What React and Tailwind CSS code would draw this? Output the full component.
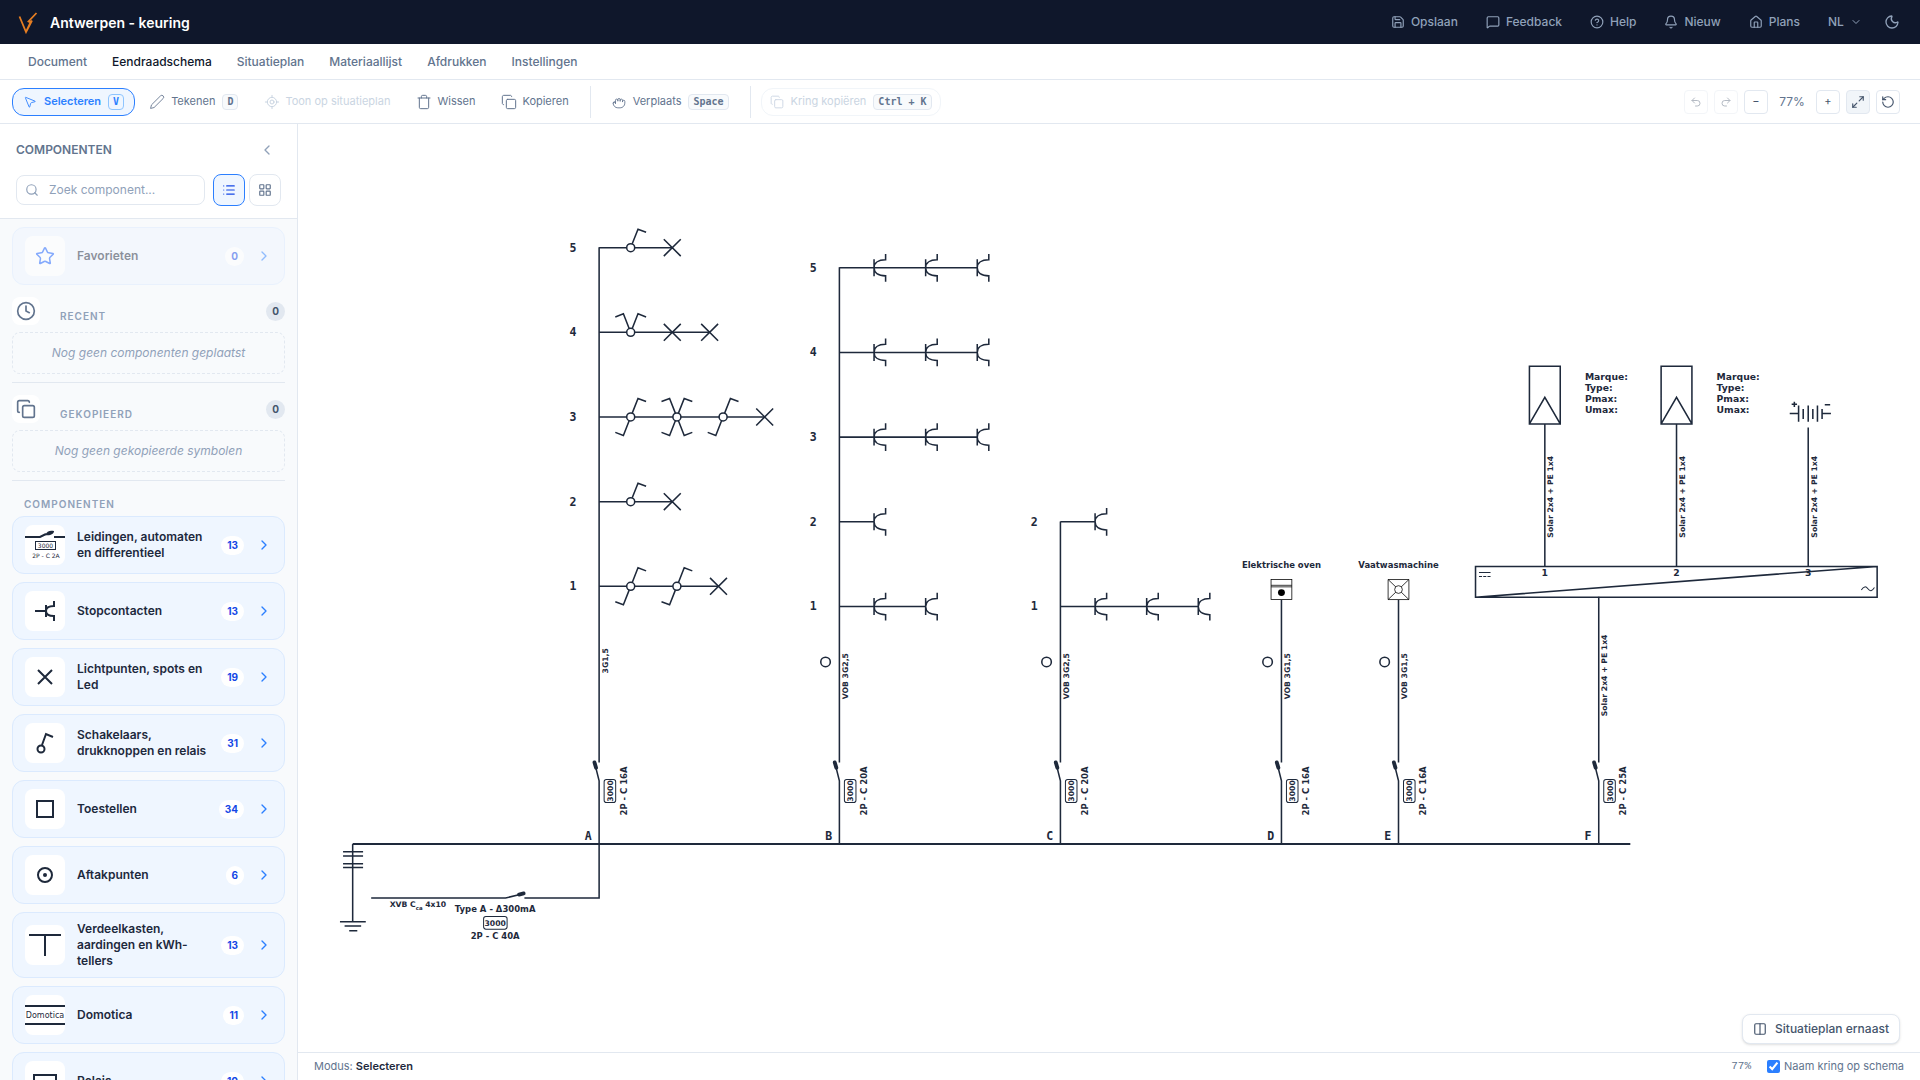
import React from 'react'
import {
  Bell,
  ChevronDown,
  ChevronLeft,
  ChevronRight,
  CircleHelp,
  Clock,
  Columns2,
  Copy,
  HandGrab,
  House,
  LayoutGrid,
  List,
  LocateFixed,
  Maximize2,
  MessageSquare,
  Moon,
  MousePointer2,
  Redo2,
  RotateCcw,
  Save,
  Search,
  Star,
  Trash,
  Undo2,
} from 'lucide-react'

const headerLinks = [
  { label: 'Opslaan', icon: Save },
  { label: 'Feedback', icon: MessageSquare },
  { label: 'Help', icon: CircleHelp },
  { label: 'Nieuw', icon: Bell },
  { label: 'Plans', icon: House },
]

const tabs = ['Document', 'Eendraadschema', 'Situatieplan', 'Materiaallijst', 'Afdrukken', 'Instellingen']

const categories = [
  { name: 'Leidingen, automaten en differentieel', count: 13, symbol: BreakerSymbol },
  { name: 'Stopcontacten', count: 13, symbol: SocketSymbol },
  { name: 'Lichtpunten, spots en Led', count: 19, symbol: LampSymbol },
  { name: 'Schakelaars, drukknoppen en relais', count: 31, symbol: SwitchSymbol },
  { name: 'Toestellen', count: 34, symbol: DeviceSymbol },
  { name: 'Aftakpunten', count: 6, symbol: JunctionSymbol },
  { name: 'Verdeelkasten, aardingen en kWh-tellers', count: 13, symbol: BoardSymbol },
  { name: 'Domotica', count: 11, symbol: DomoticaSymbol },
  { name: 'Relais', count: 10, symbol: RelaySymbol },
]

/* ---------- Sidebar symbols ---------- */

function Symbol({ children }) {
  return (
    <svg viewBox="0 0 40 40" className="size-10" fill="none" stroke="#1e293b" strokeWidth="2" aria-hidden="true">
      {children}
    </svg>
  )
}

function BreakerSymbol() {
  return (
    <Symbol>
      <path d="M0 12h15l6-3M29 12h11" />
      <path d="M20 10c2-4 5-5 9-4 0 3-4 5-9 4z" fill="#1e293b" stroke="none" />
      <rect x="10.5" y="16.5" width="20" height="8" strokeWidth="1" />
      <text x="20.5" y="23" fontSize="6" textAnchor="middle" fill="#1e293b" stroke="none" className="font-['DejaVu_Sans']">3000</text>
      <text x="21" y="33" fontSize="6" textAnchor="middle" fill="#1e293b" stroke="none" className="font-['DejaVu_Sans']">2P - C 2A</text>
    </Symbol>
  )
}

function SocketSymbol() {
  return (
    <Symbol>
      <path d="M10 20h11M21 14v12M29 10v5c-5 0-8 2-8 5s3 5 8 5v5" />
    </Symbol>
  )
}

function LampSymbol() {
  return (
    <Symbol>
      <path d="M13 13l14 14M27 13L13 27" />
    </Symbol>
  )
}

function SwitchSymbol() {
  return (
    <Symbol>
      <circle cx="16" cy="26" r="3.5" />
      <path d="M17 22l4-11 7 3" />
    </Symbol>
  )
}

function DeviceSymbol() {
  return (
    <Symbol>
      <rect x="12" y="12" width="16" height="16" />
    </Symbol>
  )
}

function JunctionSymbol() {
  return (
    <Symbol>
      <circle cx="20" cy="20" r="7" />
      <circle cx="20" cy="20" r="2" fill="#1e293b" stroke="none" />
    </Symbol>
  )
}

function BoardSymbol() {
  return (
    <Symbol>
      <path d="M4 10h32M20 10v21" />
    </Symbol>
  )
}

function DomoticaSymbol() {
  return (
    <Symbol>
      <path d="M0 11h40M0 29h40" />
      <text x="20" y="23" fontSize="8" textAnchor="middle" fill="#1e293b" stroke="none" className="font-['DejaVu_Sans']">Domotica</text>
    </Symbol>
  )
}

function RelaySymbol() {
  return (
    <Symbol>
      <rect x="9" y="14" width="22" height="12" />
    </Symbol>
  )
}

/* ---------- Schema ---------- */

const BUS_Y = 935

function Label({ x, y, size = 11, anchor = 'middle', vertical, children }) {
  return (
    <text
      x={x}
      y={y}
      fontSize={size}
      textAnchor={anchor}
      transform={vertical ? `rotate(-90 ${x} ${y})` : undefined}
      fill="#1e293b"
      stroke="none"
      className="font-['DejaVu_Sans',sans-serif] font-bold"
    >
      {children}
    </text>
  )
}

function Mark({ x, y, children }) {
  return (
    <text x={x} y={y} fontSize="15" textAnchor="middle" fill="#1e293b" stroke="none" className="font-['DejaVu_Sans_Mono',monospace] font-bold">
      {children}
    </text>
  )
}

function Lamp({ x, y }) {
  return <path d={`M${x - 11} ${y - 11}l22 22M${x + 11} ${y - 11}l-22 22`} />
}

const arms = {
  ur: 'M2 -5L9.5 -24L20 -20',
  ul: 'M-2 -5L-9.5 -24L-20 -20',
  dl: 'M-2 5L-9.5 24L-20 20',
  dr: 'M2 5L9.5 24L20 20',
}

function Switch({ x, y, dirs }) {
  return (
    <g transform={`translate(${x} ${y})`}>
      {dirs.map((dir) => (
        <path key={dir} d={arms[dir]} />
      ))}
      <circle r="5.2" fill="#fff" />
    </g>
  )
}

function Socket({ x, y }) {
  return (
    <g transform={`translate(${x} ${y})`}>
      <path d="M0 -11V11M15 -18V-10.5C5 -10.5 0 -6 0 0C0 6 5 10.5 15 10.5V18" />
    </g>
  )
}

// Vertical feeder between the bus and the first load of a circuit
function Feeder({ x, top, name, rating, cable, cableY = 717, conduit = true }) {
  return (
    <g>
      <path d={`M${x} ${top}V829M${x} ${BUS_Y}V853L${x - 6} 829`} />
      <path d={`M${x - 6} 829L${x - 4} 836`} strokeWidth="5" strokeLinecap="round" />
      <rect x={x + 6.5} y="851" width="15" height="30" rx="3" strokeWidth="1.3" />
      <Label x={x + 18} y={866} size={10} vertical>3000</Label>
      <Label x={x + 36} y={866} vertical>{rating}</Label>
      <Label x={x + 11} y={cableY} size={10} vertical>{cable}</Label>
      {conduit && <circle cx={x - 18} cy="698.5" r="6.2" />}
      <Mark x={x - 14} y={930}>{name}</Mark>
    </g>
  )
}

const lightRows = [
  { n: 5, y: 160.6, switches: [[432, ['ur']]], lamps: [486] },
  { n: 4, y: 270.5, switches: [[432, ['ul', 'ur']]], lamps: [486, 534.5] },
  { n: 3, y: 380.4, switches: [[432, ['ur', 'dl']], [492, ['ul', 'ur', 'dl', 'dr']], [552, ['ur', 'dl']]], lamps: [606] },
  { n: 2, y: 490.4, switches: [[432, ['ur']]], lamps: [486] },
  { n: 1, y: 600.3, switches: [[432, ['ur', 'dl']], [492, ['ur', 'dl']]], lamps: [546] },
]

const socketRows = [
  { x: 703, n: 5, y: 186.7, count: 3 },
  { x: 703, n: 4, y: 296.6, count: 3 },
  { x: 703, n: 3, y: 406.6, count: 3 },
  { x: 703, n: 2, y: 516.6, count: 1 },
  { x: 703, n: 1, y: 626.6, count: 2 },
  { x: 990, n: 2, y: 516.6, count: 1 },
  { x: 990, n: 1, y: 626.6, count: 3 },
]

function LightRow({ row }) {
  return (
    <g>
      <path d={`M391 ${row.y}H${row.lamps[row.lamps.length - 1]}`} />
      <Mark x={357} y={row.y + 5}>{row.n}</Mark>
      {row.switches.map(([x, dirs]) => (
        <Switch key={x} x={x} y={row.y} dirs={dirs} />
      ))}
      {row.lamps.map((x) => (
        <Lamp key={x} x={x} y={row.y} />
      ))}
    </g>
  )
}

function SocketRow({ row }) {
  const xs = Array.from({ length: row.count }, (_, i) => row.x + 45 + i * 67)
  return (
    <g>
      <path d={`M${row.x} ${row.y}H${xs[xs.length - 1]}`} />
      <Mark x={row.x - 34} y={row.y + 5}>{row.n}</Mark>
      {xs.map((x) => (
        <Socket key={x} x={x} y={row.y} />
      ))}
    </g>
  )
}

function Panel({ x }) {
  return (
    <g>
      <path d={`M${x - 20} 314.5h40v75h-40zM${x - 20} 389.5L${x} 355L${x + 20} 389.5`} />
      {['Marque:', 'Type:', 'Pmax:', 'Umax:'].map((line, i) => (
        <Label key={line} x={x + 52} y={333 + i * 14} size={12} anchor="start">{line}</Label>
      ))}
    </g>
  )
}

function Battery() {
  return (
    <g>
      <path d="M1937 376h11.5M1948.5 365.5v21M1954.5 370v13M1961 365.5v21M1967 370v13M1973 365.5v21M1979 370v13M1979 376h11.5" />
      <path d="M1939.5 364h7M1943 360.5v7M1982.5 364.5h7" />
    </g>
  )
}

function Inverter() {
  return (
    <g>
      <path d="M1529 574.5h521.5v40H1529zM1529 614.5L2050.5 574.5" />
      <path d="M1533.5 582.5h15M1533.5 587.5h4M1539 587.5h4M1544.5 587.5h4" strokeWidth="1.3" />
      <path d="M2030 605c3 -5 6 -5 8.5 -1.5s5.5 3.5 8.5 -1.5" strokeWidth="1.3" />
      {[1619, 1790, 1961].map((x, i) => (
        <g key={x}>
          <path d={`M${x} 574.5V${i === 2 ? 394 : 389.5}`} />
          <Label x={x + 11} y={484} size={10} vertical>Solar 2x4 + PE 1x4</Label>
          <Label x={x} y={587} size={12}>{i + 1}</Label>
        </g>
      ))}
    </g>
  )
}

function Schema() {
  return (
    <svg
      viewBox="0 0 2106 1205"
      preserveAspectRatio="xMinYMin meet"
      className="block h-full w-full"
      fill="none"
      stroke="#1e293b"
      strokeWidth="2"
      role="img"
      aria-label="Eendraadschema"
    >
      {/* Bus bar and earthing */}
      <path d={`M71 ${BUS_Y}H1730`} strokeWidth="2.5" />
      <path d={`M71 1036V${BUS_Y}`} />
      <path d="M58.5 945h26M58.5 950.5h26M58.5 960.5h26M58.5 965.5h26" />
      <path d="M54.5 1036H88M60.5 1041.5H82M66.5 1047.5H77" />

      {/* Main breaker */}
      <path d={`M391 ${BUS_Y}V1005H294M95 1005H269.5L291 1000`} />
      <path d="M287 1000.5L293 999" strokeWidth="5" strokeLinecap="round" />
      <Label x={119} y={1017} size={10} anchor="start">
        XVB C<tspan fontSize="7" dy="3">ca</tspan><tspan dy="-3"> 4x10</tspan>
      </Label>
      <Label x={256} y={1023}>Type A - Δ300mA</Label>
      <rect x="241" y="1029" width="30.5" height="16.5" rx="3" strokeWidth="1.3" />
      <Label x={256} y={1041} size={10}>3000</Label>
      <Label x={256} y={1058}>2P - C 40A</Label>

      {/* Circuits */}
      <Feeder x={391} top={160} name="A" rating="2P - C 16A" cable="3G1,5" cableY={697} conduit={false} />
      <Feeder x={703} top={186} name="B" rating="2P - C 20A" cable="VOB 3G2,5" />
      <Feeder x={990} top={516} name="C" rating="2P - C 20A" cable="VOB 3G2,5" />
      <Feeder x={1277} top={618} name="D" rating="2P - C 16A" cable="VOB 3G1,5" />
      <Feeder x={1429} top={618} name="E" rating="2P - C 16A" cable="VOB 3G1,5" />
      <Feeder x={1689} top={614} name="F" rating="2P - C 25A" cable="Solar 2x4 + PE 1x4" cableY={716} conduit={false} />

      {lightRows.map((row) => (
        <LightRow key={row.n} row={row} />
      ))}
      {socketRows.map((row) => (
        <SocketRow key={`${row.x}-${row.n}`} row={row} />
      ))}

      {/* Appliances */}
      <Label x={1277} y={576}>Elektrische oven</Label>
      <g stroke="#000" strokeWidth="1">
        <rect x="1263.5" y="591.5" width="27" height="26" />
        <path d="M1263.5 599h27M1263.5 601h27" />
        <circle cx="1277" cy="608.5" r="4.5" fill="#000" stroke="none" />
      </g>
      <Label x={1429} y={576}>Vaatwasmachine</Label>
      <g stroke="#000" strokeWidth="1">
        <path d="M1415.5 591.5h27v26h-27zl27 26M1442.5 591.5l-27 26" />
        <circle cx="1429" cy="604.5" r="5" fill="#fff" />
      </g>

      {/* Solar installation */}
      <Panel x={1619} />
      <Panel x={1790} />
      <Battery />
      <Inverter />
    </svg>
  )
}

/* ---------- Page chrome ---------- */

function Header() {
  return (
    <header className="flex h-11 shrink-0 items-center bg-slate-900 pl-4 pr-3">
      <svg viewBox="0 0 24 24" className="size-6" fill="none" stroke="#e67e22" strokeWidth="1.8" aria-hidden="true">
        <path d="M3.5 6.5L10 22L14.5 12.5L12.5 11.5L20.5 3M14.5 12.5L13 10M10 22L16 10.5" />
      </svg>
      <h1 className="ml-2.5 text-[14px] font-semibold text-white">Antwerpen - keuring</h1>
      <nav className="ml-auto flex items-center gap-1 text-[12px] font-medium text-slate-400">
        {headerLinks.map(({ label, icon: Icon }) => (
          <button key={label} type="button" className="flex items-center gap-1.5 px-3">
            <Icon className="size-3.5" />
            {label}
          </button>
        ))}
        <label className="relative flex items-center pl-3">
          <select aria-label="Taal" className="w-11 appearance-none bg-transparent">
            <option>NL</option>
          </select>
          <ChevronDown className="pointer-events-none absolute right-2.5 size-3" />
        </label>
        <button type="button" aria-label="Donkere modus" className="flex w-8 justify-center">
          <Moon className="size-4" />
        </button>
      </nav>
    </header>
  )
}

function Tabs() {
  return (
    <nav className="flex h-9 shrink-0 items-center gap-px border-b border-slate-200 bg-white px-4">
      {tabs.map((tab) => (
        <a key={tab} href="#" className={`px-3 text-[12px] font-medium ${tab === 'Eendraadschema' ? 'text-slate-900' : 'text-slate-500'}`}>
          {tab}
        </a>
      ))}
    </nav>
  )
}

function Kbd({ active, children }) {
  return (
    <kbd
      className={`flex h-4 items-center rounded-sm border px-1 font-['DejaVu_Sans_Mono',monospace] text-[10px] font-bold ${active ? 'border-blue-300 bg-blue-50 text-blue-500' : 'border-slate-200 bg-slate-50 text-slate-500'}`}
    >
      {children}
    </kbd>
  )
}

function PencilIcon() {
  return (
    <svg viewBox="0 0 24 24" className="size-3.5 overflow-visible" fill="none" stroke="currentColor" strokeWidth="1.5" strokeLinejoin="round" aria-hidden="true">
      <path d="M18 1.5a3 3 0 1 1 4.5 4.5L7 21.5 1 23l1.5-6z" />
    </svg>
  )
}

function Toolbar() {
  const tool = 'flex h-7 items-center gap-[7px] rounded-xl border border-transparent px-2.5'
  const wideTool = 'flex h-7 items-center gap-[5px] rounded-xl border border-transparent px-2.5'
  const square = 'flex size-6 items-center justify-center rounded border border-slate-200 text-slate-600'
  return (
    <div className="flex h-11 shrink-0 items-center border-b border-slate-200 bg-white pl-3 pr-5 text-[11px] text-slate-500">
      <div className="flex items-center gap-1">
        <button type="button" className="flex h-7 items-center gap-[7px] rounded-xl border border-blue-500 bg-blue-50 px-2.5 font-semibold text-blue-500">
          <MousePointer2 className="size-3.5" strokeWidth={1.5} />
          Selecteren
          <Kbd active>V</Kbd>
        </button>
        <button type="button" className={tool}>
          <PencilIcon />
          Tekenen
          <Kbd>D</Kbd>
        </button>
        <button type="button" disabled className={`${wideTool} text-slate-300`}>
          <LocateFixed className="size-4" strokeWidth={1.5} />
          Toon op situatieplan
        </button>
        <button type="button" className={wideTool}>
          <Trash className="size-4" strokeWidth={1.5} />
          Wissen
        </button>
        <button type="button" className={wideTool}>
          <Copy className="size-4" strokeWidth={1.5} />
          Kopieren
        </button>
      </div>
      <div className="mx-2.5 h-8 w-px bg-slate-200" />
      <button type="button" className={tool}>
        <HandGrab className="size-3.5" strokeWidth={1.5} />
        Verplaats
        <Kbd>Space</Kbd>
      </button>
      <div className="mx-2.5 h-8 w-px bg-slate-200" />
      <button type="button" disabled className="flex h-7 items-center gap-[7px] rounded-xl border border-slate-100 px-2 text-slate-300">
        <Copy className="size-3.5" strokeWidth={1.5} />
        Kring kopiëren
        <Kbd>Ctrl + K</Kbd>
      </button>

      <div className="ml-auto flex items-center gap-1.5">
        <button type="button" disabled aria-label="Ongedaan maken" className={`${square} opacity-40`}>
          <Undo2 className="size-3" />
        </button>
        <button type="button" disabled aria-label="Opnieuw" className={`${square} opacity-40`}>
          <Redo2 className="size-3" />
        </button>
        <button type="button" aria-label="Uitzoomen" className={square}>−</button>
        <span className="w-9 text-center text-[12px]">77%</span>
        <button type="button" aria-label="Inzoomen" className={square}>+</button>
        <button type="button" aria-label="Passend maken" className={`${square} bg-slate-100`}>
          <Maximize2 className="size-3.5" />
        </button>
        <button type="button" aria-label="Zoom herstellen" className={square}>
          <RotateCcw className="size-3.5" />
        </button>
      </div>
    </div>
  )
}

function CategoryCard({ name, count, faded, children }) {
  return (
    <button
      type="button"
      className={`flex min-h-[58px] w-full shrink-0 items-center rounded-xl border border-blue-100 bg-blue-50 px-3 py-2 text-left ${faded ? 'opacity-50' : ''}`}
    >
      <span className="flex size-10 shrink-0 items-center justify-center overflow-hidden rounded-lg bg-white">{children}</span>
      <span className="ml-3 w-[134px] text-[12px] leading-4 font-semibold text-slate-800">{name}</span>
      <span className="flex flex-1 justify-end">
        <span className="rounded-full bg-white px-1.5 text-[10px] leading-[19px] font-bold text-blue-700">{count}</span>
      </span>
      <ChevronRight className="ml-3 size-4 shrink-0 text-blue-500" />
    </button>
  )
}

function EmptyGroup({ title, text, icon: Icon }) {
  return (
    <section className="border-b border-slate-200 pt-3 pb-2">
      <div className="flex items-center">
        <span className="flex size-7 items-center justify-center rounded-lg bg-white text-slate-500">
          <Icon className="size-5" />
        </span>
        <h3 className="ml-5 pt-2.5 text-[10px] font-semibold tracking-widest text-slate-400">{title}</h3>
        <span className="ml-auto rounded-full bg-slate-200 px-1.5 text-[10px] leading-[19px] font-bold text-slate-600">0</span>
      </div>
      <p className="mt-[7px] flex h-[42px] items-center justify-center rounded-lg border border-dashed border-slate-200 text-[12px] text-slate-400 italic">
        {text}
      </p>
    </section>
  )
}

function Sidebar() {
  return (
    <aside className="flex w-[298px] shrink-0 flex-col border-r border-slate-200 bg-slate-50">
      <div className="border-b border-slate-200 bg-white px-4 pt-4 pb-3">
        <div className="flex h-5 items-center justify-between">
          <h2 className="text-[12px] font-semibold text-slate-500">COMPONENTEN</h2>
          <button type="button" aria-label="Paneel inklappen" className="mr-1.5 text-slate-400">
            <ChevronLeft className="size-4" />
          </button>
        </div>
        <div className="mt-3.5 flex items-center gap-1">
          <label className="mr-1 flex h-[30px] min-w-0 flex-1 items-center gap-2.5 rounded-lg border border-slate-200 px-2 text-slate-400">
            <Search className="size-3.5 shrink-0" />
            <input type="text" aria-label="Zoek component" placeholder="Zoek component..." className="min-w-0 flex-1 text-[12px] outline-none placeholder:text-slate-400" />
          </label>
          <button type="button" aria-label="Lijst" className="flex size-8 items-center justify-center rounded-lg border border-blue-500 bg-blue-50 text-blue-700">
            <List className="size-3.5" />
          </button>
          <button type="button" aria-label="Raster" className="flex size-8 items-center justify-center rounded-lg border border-slate-200 text-slate-500">
            <LayoutGrid className="size-3.5" />
          </button>
        </div>
      </div>

      <div className="flex min-h-0 flex-1 flex-col overflow-hidden px-3 pt-2">
        <CategoryCard name="Favorieten" count={0} faded>
          <Star className="size-5 text-blue-600" strokeWidth={1.8} />
        </CategoryCard>
        <EmptyGroup title="RECENT" text="Nog geen componenten geplaatst" icon={Clock} />
        <EmptyGroup title="GEKOPIEERD" text="Nog geen gekopieerde symbolen" icon={Copy} />

        <h3 className="mt-[15px] pl-3 text-[10px] leading-4 font-semibold tracking-widest text-slate-400">COMPONENTEN</h3>
        <div className="mt-1 flex flex-col gap-2">
          {categories.map(({ name, count, symbol: Picture }) => (
            <CategoryCard key={name} name={name} count={count}>
              <Picture />
            </CategoryCard>
          ))}
        </div>
      </div>
    </aside>
  )
}

export default function App() {
  return (
    <div className="flex h-screen flex-col overflow-hidden bg-white font-[Inter,sans-serif]">
      <Header />
      <Tabs />
      <Toolbar />
      <div className="flex min-h-0 flex-1">
        <Sidebar />
        <div className="flex min-w-0 flex-1 flex-col">
          <main className="relative min-h-0 flex-1">
            <Schema />
            <button
              type="button"
              className="absolute right-5 bottom-2 flex h-[30px] items-center gap-2 rounded-lg border border-slate-200 bg-white px-2.5 text-[12px] font-medium text-slate-600 shadow-sm"
            >
              <Columns2 className="size-3.5" />
              Situatieplan ernaast
            </button>
          </main>
          <footer className="flex h-7 shrink-0 items-center border-t border-slate-200 bg-white px-4 text-[11px] text-slate-500">
            <span>
              Modus: <strong className="font-semibold text-slate-800">Selecteren</strong>
            </span>
            <span className="ml-auto font-['Liberation_Mono',monospace]">77%</span>
            <label className="ml-4 flex items-center gap-1">
              <input type="checkbox" defaultChecked className="size-[13px] accent-blue-500" />
              Naam kring op schema
            </label>
          </footer>
        </div>
      </div>
    </div>
  )
}
